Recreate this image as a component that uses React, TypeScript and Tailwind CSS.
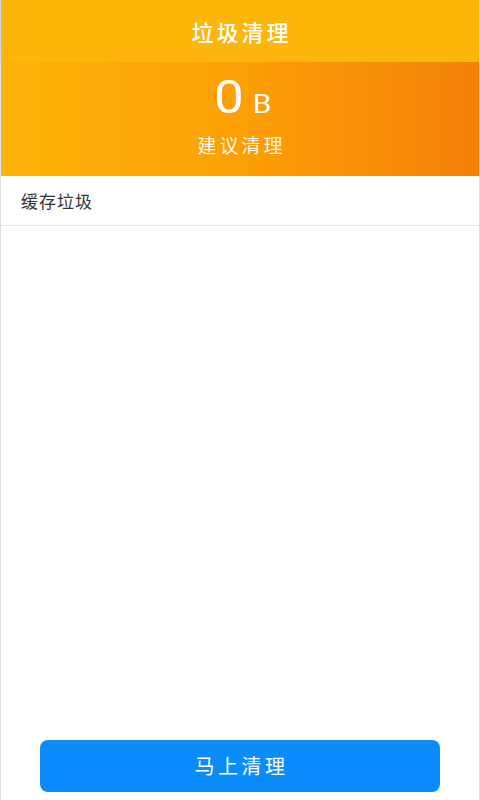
export default function App() {
  return (
    <div className="h-[800px] w-[480px] flex flex-col bg-white border-x border-[#dcdcdc] font-['Noto_Sans_CJK_SC','Liberation_Sans',sans-serif] overflow-hidden">
      {/* 标题栏 */}
      <header className="h-[62px] shrink-0 flex items-center justify-center bg-[#fdb609]">
        <h1 className="text-[22px] leading-none font-medium text-white tracking-[3px] pl-[3px]">垃圾清理</h1>
      </header>

      {/* 垃圾大小 */}
      <div className="h-[114px] shrink-0 flex flex-col items-center bg-gradient-to-r from-[#fdb30a] via-[#fca005] to-[#f47f0b]">
        <div className="flex items-baseline gap-[12px] text-white mt-[12px] leading-none font-['Roboto','Liberation_Sans',sans-serif] pl-[6px]">
          <span className="text-[46px] font-normal leading-none scale-x-[1.15]">0</span>
          <span className="text-[26px] leading-none scale-x-[1.15]">B</span>
        </div>
        <p className="mt-[15px] text-[19px] leading-none text-white/95 tracking-[3px] pl-[3px]">建议清理</p>
      </div>

      {/* 列表 */}
      <div className="h-[50px] shrink-0 flex items-center px-[20px] border-b border-[#e6e6e6]">
        <span className="text-[17px] text-[#333] tracking-[1px]">缓存垃圾</span>
      </div>

      <div className="flex-1" />

      {/* 按钮 */}
      <div className="px-[39px] pb-[8px]">
        <button className="w-full h-[52px] rounded-[8px] bg-[#0a8cfd] text-white text-[20px] tracking-[3.5px] pl-[3px]">马上清理</button>
      </div>
    </div>
  );
}
